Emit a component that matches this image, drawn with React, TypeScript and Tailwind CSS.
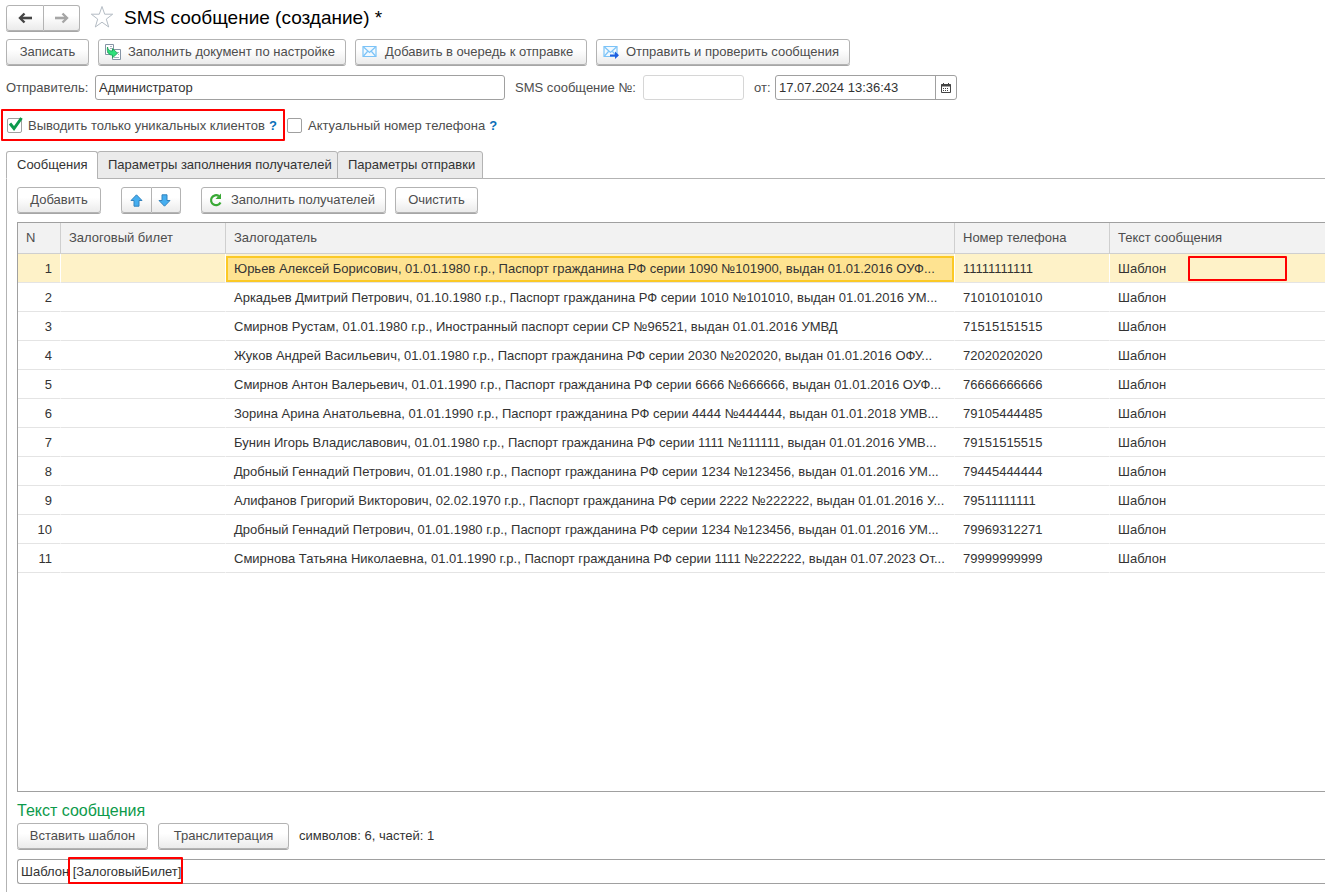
import { useState } from "react";
import type { ReactNode } from "react";
import clsx from "clsx";

const rows = [
  { client: "Юрьев Алексей Борисович, 01.01.1980 г.р., Паспорт гражданина РФ серии 1090 №101900, выдан 01.01.2016 ОУФ...", phone: "11111111111" },
  { client: "Аркадьев Дмитрий Петрович, 01.10.1980 г.р., Паспорт гражданина РФ серии 1010 №101010, выдан 01.01.2016 УМ...", phone: "71010101010" },
  { client: "Смирнов Рустам, 01.01.1980 г.р., Иностранный паспорт серии СР №96521, выдан 01.01.2016 УМВД", phone: "71515151515" },
  { client: "Жуков Андрей Васильевич, 01.01.1980 г.р., Паспорт гражданина РФ серии 2030 №202020, выдан 01.01.2016 ОФУ...", phone: "72020202020" },
  { client: "Смирнов Антон Валерьевич, 01.01.1990 г.р., Паспорт гражданина РФ серии 6666 №666666, выдан 01.01.2016 ОУФ...", phone: "76666666666" },
  { client: "Зорина Арина Анатольевна, 01.01.1990 г.р., Паспорт гражданина РФ серии 4444 №444444, выдан 01.01.2018 УМВ...", phone: "79105444485" },
  { client: "Бунин Игорь Владиславович, 01.01.1980 г.р., Паспорт гражданина РФ серии 1111 №111111, выдан 01.01.2016 УМВ...", phone: "79151515515" },
  { client: "Дробный Геннадий Петрович, 01.01.1980 г.р., Паспорт гражданина РФ серии 1234 №123456, выдан 01.01.2016 УМ...", phone: "79445444444" },
  { client: "Алифанов Григорий Викторович, 02.02.1970 г.р., Паспорт гражданина РФ серии 2222 №222222, выдан 01.01.2016 У...", phone: "79511111111" },
  { client: "Дробный Геннадий Петрович, 01.01.1980 г.р., Паспорт гражданина РФ серии 1234 №123456, выдан 01.01.2016 УМ...", phone: "79969312271" },
  { client: "Смирнова Татьяна Николаевна, 01.01.1990 г.р., Паспорт гражданина РФ серии 1111 №222222, выдан 01.07.2023 От...", phone: "79999999999" },
];

const tabs = ["Сообщения", "Параметры заполнения получателей", "Параметры отправки"];

function Button({ className, children }: { className?: string; children: ReactNode }) {
  return (
    <button
      type="button"
      className={clsx(
        "flex h-[26px] shrink-0 items-center whitespace-nowrap rounded-[3px] border border-[#b3b3b3] bg-linear-to-b from-white from-40% to-[#ebebeb] leading-[18px] text-[#4d4d4d] shadow-[0_1px_0_#a6a6a6]",
        className
      )}
    >
      {children}
    </button>
  );
}

function BackArrow({ className }: { className: string }) {
  return (
    <svg viewBox="0 0 14 12" className={clsx("h-3 w-3.5", className)} fill="none" stroke="currentColor">
      <path d="M2 6h12" strokeWidth="2.600" />
      <path d="M6.500 1.500L2 6l4.500 4.500" strokeWidth="2.400" />
    </svg>
  );
}

function UpArrow({ className }: { className?: string }) {
  return (
    <svg viewBox="0 0 13 13" className={clsx("size-[13px]", className)}>
      <path d="M6.500 .8L12 6.500H9v5.700H4V6.500H1z" fill="#45aef0" stroke="#3583bd" strokeLinejoin="round" />
    </svg>
  );
}

function FillIcon() {
  return (
    <svg viewBox="0 0 16 16" className="size-4" fill="none">
      <path d="M.5.500h8v10h-8z" fill="#fff" stroke="#8594a5" />
      <path d="M5 2.500h2M5 4.500h2M2 8.500h1" stroke="#a7b2be" />
      <path d="M7.500 5.500h8v10h-8z" fill="#fff" stroke="#8594a5" />
      <path d="M12 8.500h2M13 10.500h1M9 13.500h5" stroke="#a7b2be" />
      <path d="M2.500 3C3 6 4.500 7 7.500 7V4.500l5 4.700-5 4.600v-2.600C4 11 1.500 8.500 2.500 3z" fill="#2fe07b" stroke="#169b51" strokeWidth=".8" />
    </svg>
  );
}

function MailIcon({ send }: { send?: boolean }) {
  return (
    <svg viewBox="0 0 16 14" className="h-3.5 w-4" fill="none">
      <path d="M1 1.500h13v10H1z" fill="#f1f9ff" stroke="#7cc3f7" strokeWidth="1.200" />
      <path d="M1.500 2l6 5.500 6-5.500M1.500 11l4-4.500M13.500 11l-4-4.500" stroke="#7cc3f7" strokeWidth="1.200" />
      {send && <path d="M7 9.500h5V6.500l4 3.800-4 3.700v-2.500H7z" fill="#1d5fe0" />}
    </svg>
  );
}

function RefreshIcon() {
  return (
    <svg viewBox="0 0 14 14" className="size-3.5" fill="none">
      <path d="M9.800 3A5 5 0 1 0 11.500 9.500" stroke="#39a935" strokeWidth="2.200" />
      <path d="M6.500 6H12V.5z" fill="#39a935" />
    </svg>
  );
}

function CalendarIcon() {
  return (
    <svg viewBox="0 0 10 10" className="size-2.5" fill="none">
      <path d="M2.500 0v2M7.500 0v2" stroke="#444" />
      <path d="M.5 1.500h9v8h-9z" stroke="#444" />
      <path d="M0 2.500h10" stroke="#444" strokeWidth="2" />
      <path d="M2 5.500h6M2 7.500h6" stroke="#444" strokeDasharray="1 1" />
    </svg>
  );
}

function CheckField({ id, label, checked, className }: { id: string; label: string; checked?: boolean; className?: string }) {
  const [on, setOn] = useState(!!checked);
  return (
    <div className={clsx("flex h-8 items-center leading-[17px]", className)}>
      <span className="relative size-[15px]">
        <input
          id={id}
          type="checkbox"
          checked={on}
          onChange={() => setOn(!on)}
          className="block size-[15px] appearance-none rounded-[2px] border border-[#a0a0a0] bg-white"
        />
        {on && (
          <svg viewBox="0 0 15 15" className="pointer-events-none absolute inset-0 size-[15px] overflow-visible" fill="none">
            <path d="M3 5.500l4 5L14.500 0" stroke="#0c9a4b" strokeWidth="3" />
          </svg>
        )}
      </span>
      <label htmlFor={id} className="ml-1.5 whitespace-nowrap">
        {label}
      </label>
      <button type="button" className="ml-1 font-bold text-[#0a6fb8]">
        ?
      </button>
    </div>
  );
}

export default function App() {
  const [tab, setTab] = useState(0);

  return (
    <div className="flex min-h-screen flex-col overflow-hidden bg-white pt-[5px] font-['Liberation_Sans',Arial,sans-serif] text-[13px] leading-4 text-[#4d4d4d]">
      {/* Title */}
      <header className="flex h-[25px] items-start pl-1.5">
        <div className="flex">
          <Button className="h-6 w-[38px] justify-center rounded-r-none">
            <BackArrow className="text-[#444]" />
          </Button>
          <Button className="h-6 w-9 justify-center rounded-l-none border-l-0">
            <BackArrow className="rotate-180 text-[#a6a6a6]" />
          </Button>
        </div>
        <svg viewBox="0 0 24 24" className="ml-2.5 size-6" fill="none" stroke="#b4bcc4">
          <path d="M12 1.500l2.700 7.700h8l-6.400 4.900 2.400 7.900-6.700-4.800L5.300 22l2.400-7.900L1.300 9.200h8z" />
        </svg>
        <h1 className="ml-2.5 text-[19px] leading-[25px] text-black">SMS сообщение (создание) *</h1>
      </header>

      {/* Commands */}
      <div className="mt-[9px] flex gap-[9px] pl-1.5">
        <Button className="w-[83px] justify-center">Записать</Button>
        <Button className="w-[248px] gap-[7px] pl-1.5">
          <FillIcon />
          Заполнить документ по настройке
        </Button>
        <Button className="w-[232px] gap-[7px] pl-1.5">
          <MailIcon />
          Добавить в очередь к отправке
        </Button>
        <Button className="w-[254px] gap-[7px] pl-1.5">
          <MailIcon send />
          Отправить и проверить сообщения
        </Button>
      </div>

      {/* Document fields */}
      <div className="mt-2.5 flex items-center pl-1.5">
        <label htmlFor="sender" className="w-[89px]">
          Отправитель:
        </label>
        <input
          id="sender"
          defaultValue="Администратор"
          className="h-[25px] w-[410px] rounded-[3px] border border-[#a0a0a0] px-[3px] text-[#333]"
        />
        <label htmlFor="number" className="ml-2.5 w-32 whitespace-nowrap">
          SMS сообщение №:
        </label>
        <input id="number" className="h-[25px] w-[101px] rounded-[3px] border border-[#d6d6d6] px-[3px]" />
        <label htmlFor="date" className="ml-2.5 w-[21px]">
          от:
        </label>
        <div className="flex h-[25px] w-[182px] rounded-[3px] border border-[#a0a0a0]">
          <input id="date" defaultValue="17.07.2024 13:36:43" className="min-w-0 flex-1 px-[3px] text-[#333]" />
          <button type="button" aria-label="Календарь" className="flex w-[21px] items-center justify-center border-l border-[#a0a0a0]">
            <CalendarIcon />
          </button>
        </div>
      </div>

      <div className="mt-[9px] flex pl-px">
        <CheckField id="unique" label="Выводить только уникальных клиентов" checked className="w-[284px] rounded-[1px] border-2 border-[#ff0000] pl-1" />
        <CheckField id="actual" label="Актуальный номер телефона" className="ml-0.5" />
      </div>

      {/* Tabs */}
      <div role="tablist" className="relative z-10 mt-2.5 flex pl-1.5 text-[#333]">
        {tabs.map((name, i) => (
          <button
            key={name}
            type="button"
            role="tab"
            aria-selected={tab === i}
            onClick={() => setTab(i)}
            className={clsx(
              "-mr-px h-7 whitespace-nowrap rounded-t-[3px] border border-[#b3b3b3] pl-2.5 text-left",
              i === 0 && "w-[92px]",
              i === 1 && "w-[241px]",
              i === 2 && "w-[146px]",
              tab === i ? "border-b-white bg-white" : "bg-[#ebebeb]"
            )}
          >
            {name}
          </button>
        ))}
      </div>

      <main className="-mt-px ml-1.5 flex flex-1 flex-col border-l border-t border-[#b3b3b3] pb-2 pl-2.5 pt-2">
        <div className="flex">
          <Button className="w-[84px] justify-center">Добавить</Button>
          <Button className="ml-5 w-[31px] justify-center rounded-r-none">
            <UpArrow />
          </Button>
          <Button className="w-[29px] justify-center rounded-l-none border-l-0 pr-1">
            <UpArrow className="rotate-180" />
          </Button>
          <Button className="ml-5 w-[185px] gap-2 pl-[7px]">
            <RefreshIcon />
            Заполнить получателей
          </Button>
          <Button className="ml-[9px] w-[83px] justify-center">Очистить</Button>
        </div>

        <div className="mt-[9px] flex-1 border-y border-l border-[#a0a0a0]">
          <table className="w-full table-fixed border-separate border-spacing-0">
            <colgroup>
              <col className="w-[43px]" />
              <col className="w-[165px]" />
              <col />
              <col className="w-[155px]" />
              <col className="w-[215px]" />
            </colgroup>
            <thead>
              <tr className="h-[31px] bg-[#f2f2f2] text-left [&>th]:border-b [&>th]:border-r [&>th]:border-[#cfcfcf] [&>th]:px-2 [&>th]:font-normal [&>th:last-child]:border-r-0">
                <th>N</th>
                <th>Залоговый билет</th>
                <th>Залогодатель</th>
                <th>Номер телефона</th>
                <th>Текст сообщения</th>
              </tr>
            </thead>
            <tbody className="leading-[18px] text-[#333]">
              {rows.map((row, i) => (
                <tr
                  key={i}
                  className={clsx(
                    "h-[29px] whitespace-nowrap [&>td]:border-b [&>td]:border-r [&>td]:border-b-[#e4e4e4] [&>td:last-child]:border-r-0",
                    i === 0 ? "bg-[#fef2c8] [&>td]:border-r-white" : "[&>td]:border-r-transparent"
                  )}
                >
                  <td className="px-2 pb-0 pt-px text-right">{i + 1}</td>
                  <td></td>
                  <td className="overflow-hidden px-0 pb-0 pt-px">
                    <div
                      className={clsx(
                        "flex h-[26px] items-center",
                        i === 0 ? "border-2 border-[#fbc926] bg-[#fee391] px-1.5" : "px-2"
                      )}
                    >
                      {row.client}
                    </div>
                  </td>
                  <td className="px-2 pb-0 pt-px">{row.phone}</td>
                  <td className="pb-0 pl-2 pt-px">
                    <div className="flex items-center">
                      Шаблон
                      {i === 0 && <span className="ml-[22px] h-[25px] w-[99px] rounded-[1px] border-2 border-[#ff0000]" />}
                    </div>
                  </td>
                </tr>
              ))}
            </tbody>
          </table>
        </div>

        {/* Message text */}
        <h2 className="mt-2 text-base leading-[22px] text-[#0c9a4b]">Текст сообщения</h2>
        <div className="mt-px flex items-center">
          <Button className="w-[131px] justify-center">Вставить шаблон</Button>
          <Button className="ml-2.5 w-[131px] justify-center">Транслитерация</Button>
          <span className="ml-2.5 leading-[18px] text-[#333]">символов: 6, частей: 1</span>
        </div>
        <div className="relative mt-2.5">
          <input
            aria-label="Текст сообщения"
            defaultValue="Шаблон [ЗалоговыйБилет]"
            className="block h-[25px] w-full rounded-l-[3px] border border-r-0 border-[#a0a0a0] px-[3px] text-[#333]"
          />
          <span className="pointer-events-none absolute -top-0.5 left-[51px] h-[27px] w-[115px] rounded-[1px] border-2 border-[#ff0000]" />
        </div>
      </main>
    </div>
  );
}
